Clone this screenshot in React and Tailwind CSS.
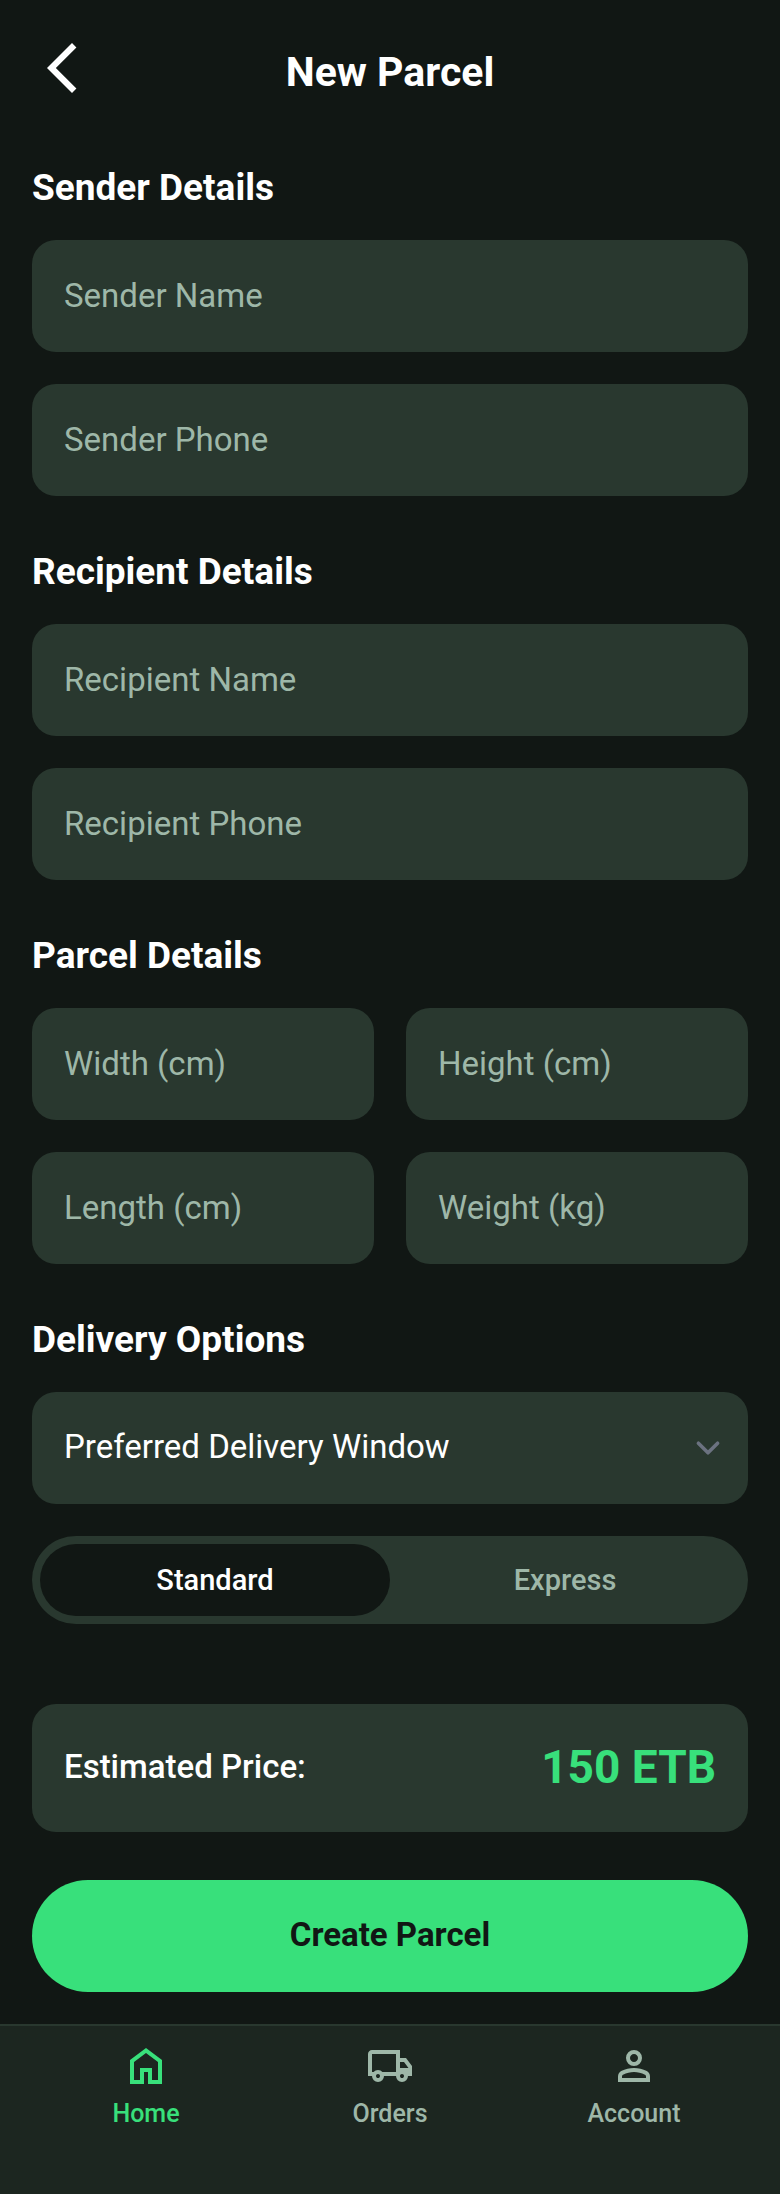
import { useState } from "react";

const fieldClass =
  "block h-28 w-full min-w-0 appearance-none rounded-3xl border-0 bg-[#29382f] px-8 pb-0.5 text-[33px] leading-10 text-white outline-none placeholder:text-[#9eb7a8] placeholder:opacity-100 focus:ring-2 focus:ring-[#38e07b]";

const icons = {
  home: "M240-200h120v-240h240v240h120v-360L480-740 240-560v360Zm-80 80v-480l320-240 320 240v480H520v-240h-80v240H160Z",
  orders:
    "M240-160q-50 0-85-35t-35-85H40v-440q0-33 23.5-56.5T120-800h560v160h120l120 160v200h-80q0 50-35 85t-85 35q-50 0-85-35t-35-85H360q0 50-35 85t-85 35Zm0-80q17 0 28.5-11.5T280-280q0-17-11.5-28.5T240-320q-17 0-28.5 11.5T200-280q0 17 11.5 28.5T240-240ZM120-360h32q17-18 39-29t49-11q27 0 49 11t39 29h272v-360H120v360Zm600 120q17 0 28.5-11.5T760-280q0-17-11.5-28.5T720-320q-17 0-28.5 11.5T680-280q0 17 11.5 28.5T720-240Zm-40-200h170l-90-120h-80v120Z",
  account:
    "M480-480q-66 0-113-47t-47-113q0-66 47-113t113-47q66 0 113 47t47 113q0 66-47 113t-113 47ZM160-160v-112q0-34 17.5-62.5T224-378q62-31 126-46.5T480-440q66 0 130 15.5T736-378q29 15 46.5 43.5T800-272v112H160Zm80-80h480v-32q0-11-5.5-20T700-306q-54-27-109-40.5T480-360q-56 0-111 13.5T260-306q-9 5-14.5 14t-5.5 20v32Zm240-320q33 0 56.5-23.5T560-640q0-33-23.5-56.5T480-720q-33 0-56.5 23.5T400-640q0 33 23.5 56.5T480-560Z",
};

function Section({ title, children }) {
  return (
    <section className="pt-14">
      <h2 className="mb-8 text-[37px] leading-10 font-bold">{title}</h2>
      {children}
    </section>
  );
}

function Field({ label, type = "text" }) {
  return <input className={fieldClass} type={type} placeholder={label} aria-label={label} />;
}

function SpeedOption({ label, checked, onSelect }) {
  return (
    <label className="flex flex-1 cursor-pointer items-center justify-center rounded-full text-[29px] leading-9 font-medium text-[#9eb7a8] has-checked:bg-[#111714] has-checked:text-white">
      <input className="sr-only" type="radio" name="speed" value={label} checked={checked} onChange={onSelect} />
      {label}
    </label>
  );
}

function NavItem({ icon, label, active = false }) {
  return (
    <a
      href={"#" + icon}
      aria-current={active ? "page" : undefined}
      className={
        "flex flex-1 flex-col items-center gap-2 text-[25px] leading-8 font-medium " +
        (active ? "text-[#38e07b]" : "text-[#9eb7a8]")
      }
    >
      <svg className="size-12" viewBox="0 -960 960 960" fill="currentColor" aria-hidden="true">
        <path d={icons[icon]} />
      </svg>
      {label}
    </a>
  );
}

export default function App() {
  const [speed, setSpeed] = useState("Standard");

  return (
    <div className="flex min-h-screen flex-col bg-[#111714] font-['Roboto',sans-serif] text-white">
      <header className="grid grid-cols-[72px_1fr_72px] items-start px-8 pt-8">
        <button type="button" aria-label="Back" className="flex h-18 items-center">
          <svg className="size-15" viewBox="0 0 24 24" fill="currentColor" aria-hidden="true">
            <path d="M17.77 3.77 16 2 6 12l10 10 1.77-1.77L9.54 12z" />
          </svg>
        </button>
        <h1 className="text-center text-[41px] leading-20 font-bold">New Parcel</h1>
      </header>

      <main className="flex-1 px-8 pb-8">
        <form onSubmit={(event) => event.preventDefault()}>
          <Section title="Sender Details">
            <div className="grid gap-8">
              <Field label="Sender Name" />
              <Field label="Sender Phone" type="tel" />
            </div>
          </Section>

          <Section title="Recipient Details">
            <div className="grid gap-8">
              <Field label="Recipient Name" />
              <Field label="Recipient Phone" type="tel" />
            </div>
          </Section>

          <Section title="Parcel Details">
            <div className="grid grid-cols-2 gap-8">
              <Field label="Width (cm)" />
              <Field label="Height (cm)" />
              <Field label="Length (cm)" />
              <Field label="Weight (kg)" />
            </div>
          </Section>

          <Section title="Delivery Options">
            <div className="grid gap-8">
              <div className="relative">
                <select className={fieldClass} aria-label="Preferred Delivery Window" defaultValue="">
                  <option value="">Preferred Delivery Window</option>
                </select>
                <svg
                  className="pointer-events-none absolute inset-y-0 right-4 my-auto size-12 text-[#6b7280]"
                  viewBox="0 0 20 20"
                  fill="none"
                  stroke="currentColor"
                  strokeWidth="1.5"
                  strokeLinecap="round"
                  strokeLinejoin="round"
                  aria-hidden="true"
                >
                  <path d="m6 8 4 4 4-4" />
                </svg>
              </div>
              <div role="radiogroup" aria-label="Delivery speed" className="relative flex h-22 rounded-full bg-[#29382f] p-2">
                <SpeedOption label="Standard" checked={speed === "Standard"} onSelect={() => setSpeed("Standard")} />
                <SpeedOption label="Express" checked={speed === "Express"} onSelect={() => setSpeed("Express")} />
              </div>
            </div>
          </Section>

          <div className="mt-20 flex h-32 items-center justify-between rounded-3xl bg-[#29382f] px-8 pb-0.5">
            <span className="text-[33px] leading-10 font-medium">Estimated Price:</span>
            <output className="text-[46px] leading-12 font-bold text-[#38e07b]">150 ETB</output>
          </div>

          <button type="submit" className="mt-12 h-28 w-full rounded-full bg-[#38e07b] pb-0.5 text-[33px] leading-10 font-bold text-[#111714]">
            Create Parcel
          </button>
        </form>
      </main>

      <nav className="flex gap-4 border-t-2 border-[#29382f] bg-[#1c2620] px-8 pt-4 pb-16">
        <NavItem icon="home" label="Home" active />
        <NavItem icon="orders" label="Orders" />
        <NavItem icon="account" label="Account" />
      </nav>
    </div>
  );
}
